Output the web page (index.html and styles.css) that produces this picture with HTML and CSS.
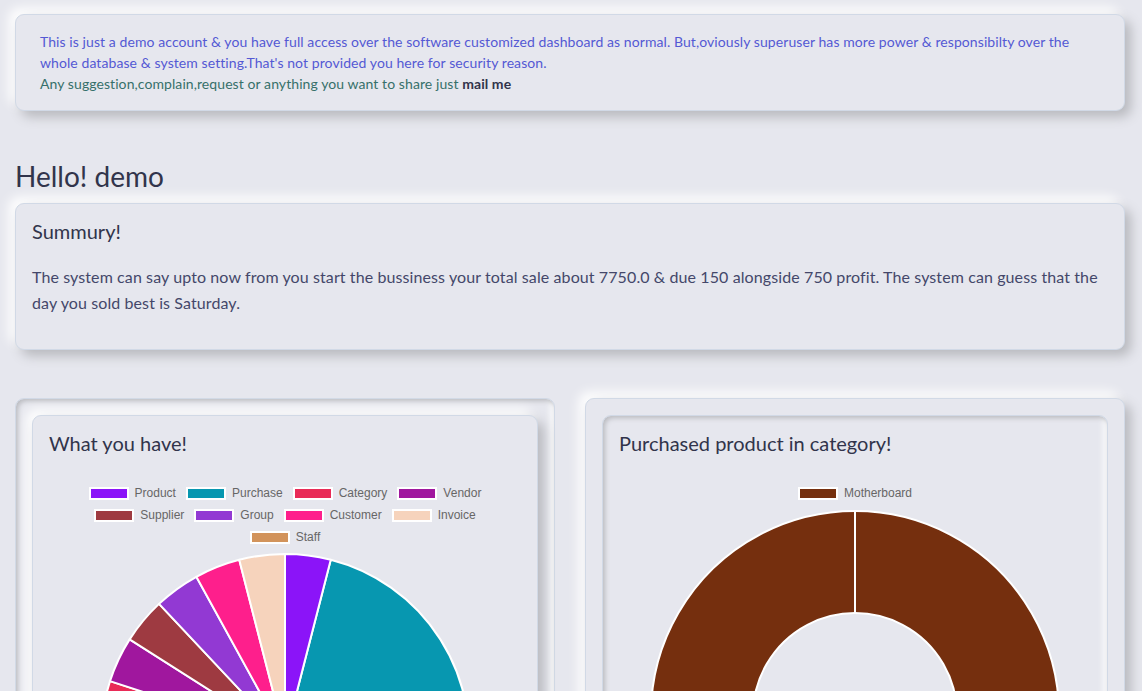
FILE: index.html
```html
<!DOCTYPE html>
<html lang="en">
<head>
<meta charset="utf-8">
<title>Dashboard</title>
<link rel="stylesheet" href="styles.css">
</head>
<body>
<div class="page">
  <div class="card raised alert">
    <p class="alert-main">This is just a demo account &amp; you have full access over the software customized dashboard as normal. But,oviously superuser has more power &amp; responsibilty over the whole database &amp; system setting.That's not provided you here for security reason.</p>
    <p class="alert-sub">Any suggestion,complain,request or anything you want to share just <a class="mail" href="#">mail me</a></p>
  </div>

  <h2 class="greeting">Hello! demo</h2>

  <div class="card raised summary">
    <h3 class="card-title">Summury!</h3>
    <p class="summary-text">The system can say upto now from you start the bussiness your total sale about 7750.0 &amp; due 150 alongside 750 profit. The system can guess that the day you sold best is Saturday.</p>
  </div>

  <div class="charts">
    <div class="card inset chart-outer">
      <div class="card raised chart-card">
        <h3 class="card-title">What you have!</h3>
        <div class="legend">
          <div class="legend-row">
            <span class="item"><i class="box c-product"></i>Product</span>
            <span class="item"><i class="box c-purchase"></i>Purchase</span>
            <span class="item"><i class="box c-category"></i>Category</span>
            <span class="item"><i class="box c-vendor"></i>Vendor</span>
          </div>
          <div class="legend-row">
            <span class="item"><i class="box c-supplier"></i>Supplier</span>
            <span class="item"><i class="box c-group"></i>Group</span>
            <span class="item"><i class="box c-customer"></i>Customer</span>
            <span class="item"><i class="box c-invoice"></i>Invoice</span>
          </div>
          <div class="legend-row">
            <span class="item"><i class="box c-staff"></i>Staff</span>
          </div>
        </div>
        <svg class="pie" width="472" height="400" viewBox="0 0 472 400">
          <g stroke="#fff" stroke-width="2" stroke-linejoin="round">
            <path fill="#0797b0" d="M236 193 L281.76 14.78 A184 184 0 1 1 52.36 181.45 Z"/>
            <path fill="#e92b57" d="M236 193 L52.36 181.45 A184 184 0 0 1 61 136.14 Z"/>
            <path fill="#a0179e" d="M236 193 L61 136.14 A184 184 0 0 1 80.64 94.41 Z"/>
            <path fill="#9e3a41" d="M236 193 L80.64 94.41 A184 184 0 0 1 110.04 58.87 Z"/>
            <path fill="#9239d3" d="M236 193 L110.04 58.87 A184 184 0 0 1 147.36 31.76 Z"/>
            <path fill="#fe1f8c" d="M236 193 L147.36 31.76 A184 184 0 0 1 190.24 14.78 Z"/>
            <path fill="#f6d3bc" d="M236 193 L190.24 14.78 A184 184 0 0 1 236 9 Z"/>
            <path fill="#8b14f8" d="M236 193 L236 9 A184 184 0 0 1 281.76 14.78 Z"/>
          </g>
        </svg>
      </div>
    </div>

    <div class="card raised chart-outer">
      <div class="card inset chart-card">
        <h3 class="card-title">Purchased product in category!</h3>
        <div class="legend">
          <div class="legend-row">
            <span class="item"><i class="box c-mother"></i>Motherboard</span>
          </div>
        </div>
        <svg class="donut" width="472" height="440" viewBox="0 0 472 440">
          <path fill="#752f0e" fill-rule="evenodd" stroke="#fff" stroke-width="2"
            d="M236 4 A204 204 0 1 1 235.99 4 Z M236 106 A102 102 0 1 0 236.01 106 Z"/>
          <line x1="236" y1="4" x2="236" y2="106" stroke="#fff" stroke-width="2"/>
        </svg>
      </div>
    </div>
  </div>
</div>
</body>
</html>
```

FILE: styles.css
```css
* { box-sizing: border-box; }

html, body {
  margin: 0;
  padding: 0;
  background: #e6e7ee;
}

body {
  font-family: Lato, "Open Sans", Arial, sans-serif;
  color: #44476a;
  overflow: hidden;
}

.page {
  padding: 14px 17px 0 15px;
}

.card {
  border: 1px solid #d1d9e6;
  border-radius: 9px;
  background: #e6e7ee;
}

.raised {
  box-shadow: 6px 6px 12px #b8b9be, -6px -6px 12px #ffffff;
}

.inset {
  box-shadow: inset 2px 2px 5px #b8b9be, inset -3px -3px 7px #ffffff;
}

/* Alert */
.alert {
  padding: 16px 24px;
  font-size: 14px;
  line-height: 21px;
  letter-spacing: 0.08px;
}

.alert p {
  margin: 0;
}

.alert-main {
  color: #5459d4;
}

.alert-sub {
  color: #36706a;
}

.mail {
  color: #31344b;
  font-weight: 700;
  text-decoration: none;
}

/* Greeting */
.greeting {
  margin: 47px 0 9px;
  font-size: 28px;
  line-height: 36px;
  font-weight: 400;
  color: #31344b;
}

/* Summary */
.summary {
  padding: 14px 16px 16px;
}

.card-title {
  margin: 0;
  font-size: 20px;
  line-height: 26px;
  font-weight: 400;
  color: #31344b;
}

.summary-text {
  margin: 20px 0 17px;
  font-size: 16px;
  line-height: 26px;
  letter-spacing: 0.1px;
  color: #44476a;
}

/* Charts */
.charts {
  display: grid;
  grid-template-columns: 1fr 1fr;
  column-gap: 30px;
  margin-top: 48px;
}

.chart-outer {
  padding: 16px;
  height: 560px;
}

.chart-card {
  padding: 14px 16px 16px;
  height: 520px;
}

.legend {
  margin-top: 26px;
  font-family: "Liberation Sans", Arial, sans-serif;
  font-size: 12px;
  color: #666666;
}

.legend-row {
  display: flex;
  justify-content: center;
  height: 22px;
  align-items: center;
}

.item {
  display: inline-flex;
  align-items: center;
  margin: 0 5px;
  white-space: nowrap;
}

.box {
  display: inline-block;
  width: 40px;
  height: 13px;
  border: 2px solid #ffffff;
  margin-right: 6px;
}

.c-product { background: #8b14f8; }
.c-purchase { background: #0797b0; }
.c-category { background: #e92b57; }
.c-vendor { background: #a0179e; }
.c-supplier { background: #9e3a41; }
.c-group { background: #9239d3; }
.c-customer { background: #fe1f8c; }
.c-invoice { background: #f6d3bc; }
.c-staff { background: #d2935b; }
.c-mother { background: #752f0e; }

.pie {
  display: block;
  margin-top: -3px;
}

.donut {
  display: block;
  margin-top: 3px;
}
```
